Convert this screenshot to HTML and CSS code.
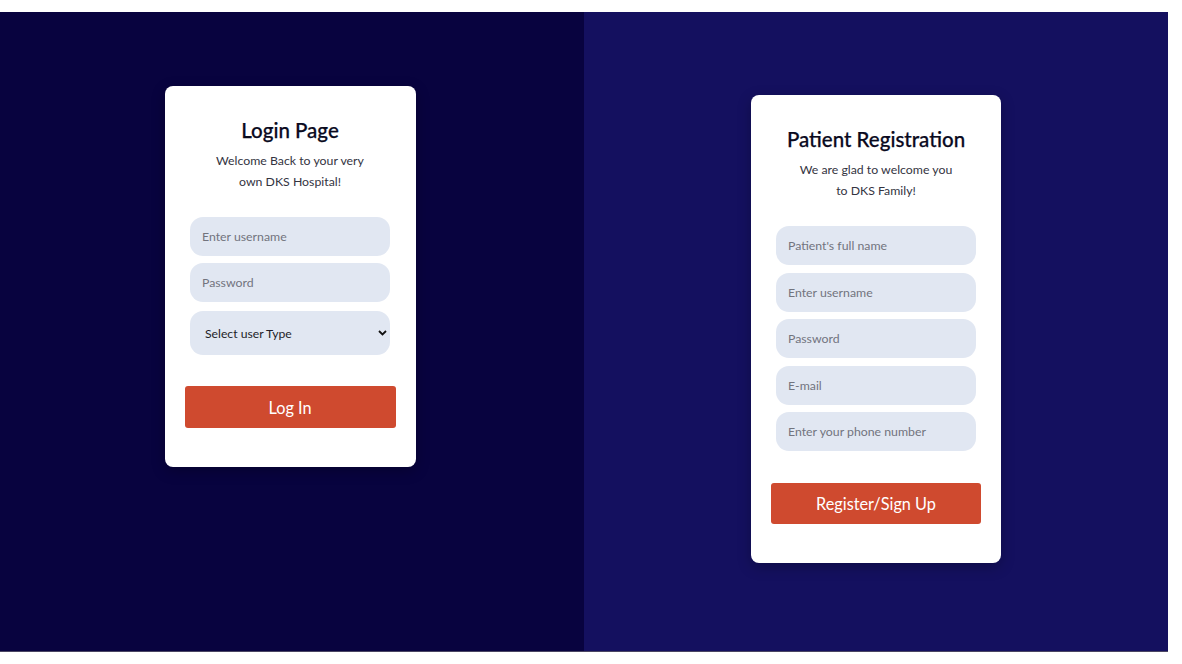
FILE: index.html
```html
<!DOCTYPE html>
<html lang="en">
<head>
<meta charset="utf-8">
<title>DKS Hospital</title>
<link rel="stylesheet" href="styles.css">
</head>
<body>
<main class="page">
  <section class="half half-login">
    <form class="card card-login">
      <h1 class="card-title">Login Page</h1>
      <p class="card-sub">Welcome Back to your very<br>own DKS Hospital!</p>
      <div class="fields">
        <input class="field" type="text" placeholder="Enter username">
        <input class="field" type="password" placeholder="Password">
        <div class="select-wrap">
          <span class="select-text">Select user Type</span>
          <svg class="chev" width="9" height="6" viewBox="0 0 9 6"><path d="M1 1 L4.5 4.5 L8 1" fill="none" stroke="#111" stroke-width="1.8"/></svg>
        </div>
      </div>
      <button class="btn" type="button">Log In</button>
    </form>
  </section>
  <section class="half half-register">
    <form class="card card-register">
      <h1 class="card-title">Patient Registration</h1>
      <p class="card-sub">We are glad to welcome you<br>to DKS Family!</p>
      <div class="fields fields-reg">
        <input class="field" type="text" placeholder="Patient's full name">
        <input class="field" type="text" placeholder="Enter username">
        <input class="field" type="password" placeholder="Password">
        <input class="field" type="email" placeholder="E-mail">
        <input class="field" type="tel" placeholder="Enter your phone number">
      </div>
      <button class="btn btn-reg" type="button">Register/Sign Up</button>
    </form>
  </section>
</main>
</body>
</html>
```

FILE: styles.css
```css
* { box-sizing: border-box; }
html, body { margin: 0; padding: 0; background: #ffffff; }
body {
  padding-top: 12px;
  font-family: Lato, "Noto Sans", sans-serif;
}
.page {
  width: 1168px;
  height: 640px;
  display: grid;
  grid-template-columns: 584px 584px;
  border-bottom: 1px solid #4b4663;
  box-shadow: 0 2px 0 #1c0a30;
}
.half {
  display: flex;
  justify-content: center;
  align-items: flex-start;
}
.half-login { background: #08033f; padding-top: 74px; padding-right: 4px; }
.half-register { background: #14105f; padding-top: 83px; }
.card {
  background: #ffffff;
  border-radius: 8px;
  width: 251px;
  padding: 29px 0 39px;
  display: flex;
  flex-direction: column;
  align-items: center;
  box-shadow: 0 4px 14px rgba(0,0,0,0.25);
}
.card-register { width: 250px; }
.card-title {
  margin: 0;
  font-size: 20.5px;
  line-height: 30px;
  font-weight: 500;
  color: #0a0a1e;
  -webkit-text-stroke: 0.25px #0a0a1e;
}
.card-sub {
  margin: 5px 0 0;
  font-size: 12.3px;
  line-height: 21px;
  text-align: center;
  color: #34343f;
}
.fields {
  margin-top: 25px;
  width: 200px;
  display: flex;
  flex-direction: column;
  gap: 7px;
}
.fields-reg { gap: 7.5px; }
.field {
  height: 39px;
  width: 100%;
  border: none;
  outline: none;
  border-radius: 13px;
  background: #e1e7f2;
  padding: 0 12px;
  font-family: inherit;
  font-size: 12.3px;
  color: #333;
}
.field::placeholder { color: #72747e; }
.select-wrap {
  margin-top: 2px;
  height: 44px;
  border-radius: 13px;
  background: #e1e7f2;
  display: flex;
  align-items: center;
  justify-content: space-between;
  padding: 0 3px 0 15px;
  font-size: 12.2px;
  color: #1e1e28;
}
.btn {
  margin-top: 31px;
  width: 211px;
  height: 42px;
  border: none;
  border-radius: 3px;
  background: #cf4a2f;
  color: #ffffff;
  font-family: inherit;
  font-size: 16.3px;
}
.btn-reg { margin-top: 32px; width: 210px; height: 41px; }
```
